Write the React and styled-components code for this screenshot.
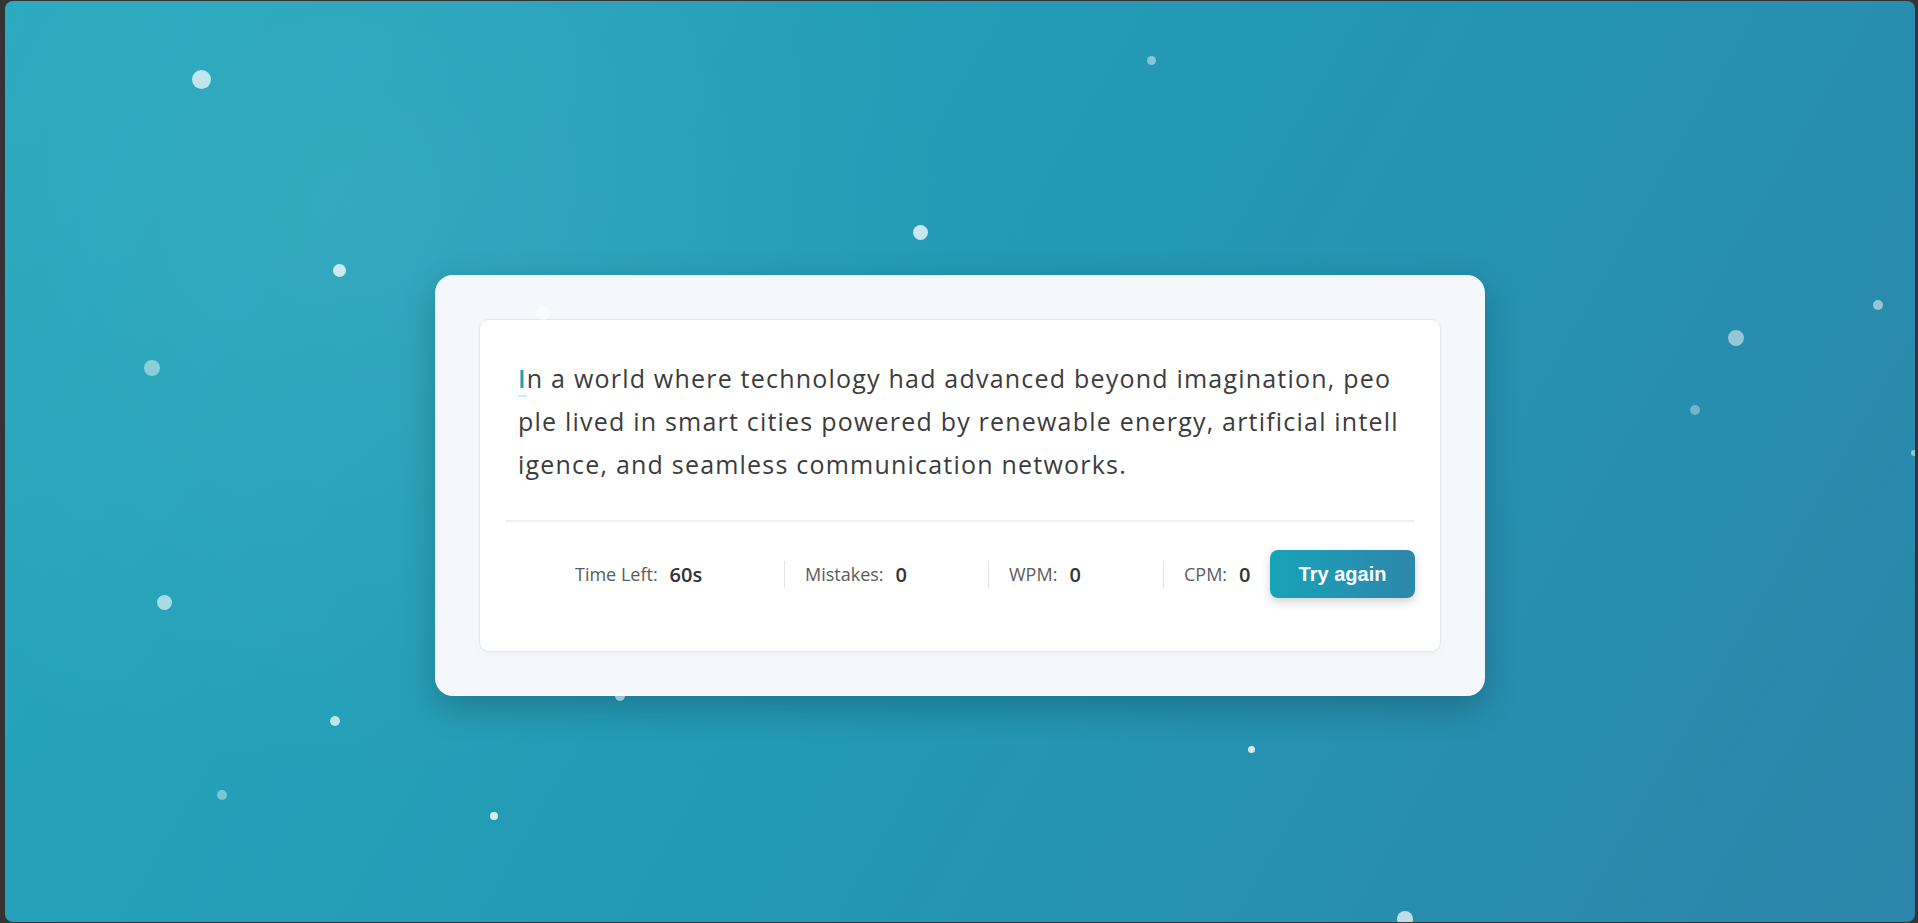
import styled, { createGlobalStyle } from "styled-components";

const GlobalStyle = createGlobalStyle`
  html, body {
    margin: 0;
    padding: 0;
    background: #343434;
    overflow: hidden;
  }
  * {
    box-sizing: border-box;
  }
`;

const lines = [
  "In a world where technology had advanced beyond imagination, peo",
  "ple lived in smart cities powered by renewable energy, artificial intell",
  "igence, and seamless communication networks.",
];

// page-space dots: x, y (centre), size, opacity
const dots = [
  [201, 79, 19, 0.7],
  [1151, 60, 9, 0.45],
  [920, 232, 15, 0.75],
  [339, 270, 13, 0.75],
  [543, 313, 14, 0.55],
  [152, 368, 16, 0.45],
  [164, 602, 15, 0.6],
  [335, 721, 10, 0.7],
  [222, 795, 10, 0.4],
  [494, 816, 8, 0.8],
  [620, 696, 10, 0.55],
  [1251, 749, 7, 0.8],
  [1405, 919, 16, 0.7],
  [1736, 338, 16, 0.5],
  [1695, 410, 10, 0.35],
  [1878, 305, 10, 0.5],
  [1914, 453, 6, 0.5],
];

const stats = [
  { label: "Time Left:", value: "60s", width: 209 },
  { label: "Mistakes:", value: "0", width: 204 },
  { label: "WPM:", value: "0", width: 175 },
  { label: "CPM:", value: "0", width: 107 },
];

const App = () => {
  return (
    <>
      <GlobalStyle />
      <Stage>
        {dots.map(([x, y, d, o], index) => (
          <Dot
            key={index}
            style={{
              left: x - 5 - d / 2,
              top: y - 1 - d / 2,
              width: d,
              height: d,
              opacity: o,
            }}
          />
        ))}
        <Card>
          <Panel>
            <Paragraph>
              {lines.map((line, li) => (
                <Line key={li}>
                  {line.split("").map((ch, ci) => (
                    <Char key={ci} $active={li === 0 && ci === 0}>
                      {ch}
                    </Char>
                  ))}
                </Line>
              ))}
            </Paragraph>
            <Divider />
            <Footer>
              <StatList>
                {stats.map((stat, index) => (
                  <Stat key={index} $w={stat.width} $first={index === 0}>
                    <Label>{stat.label}</Label>
                    <Value>{stat.value}</Value>
                  </Stat>
                ))}
              </StatList>
              <Button>Try again</Button>
            </Footer>
          </Panel>
        </Card>
      </Stage>
    </>
  );
};

const Stage = styled.div`
  position: relative;
  margin: 1px 3px 1px 5px;
  height: 921px;
  border-radius: 8px;
  overflow: hidden;
  background: radial-gradient(
      circle at 18% 22%,
      rgba(255, 255, 255, 0.07),
      rgba(255, 255, 255, 0) 35%
    ),
    linear-gradient(120deg, #26a8bd 0%, #2397b4 55%, #2c85aa 100%);
  display: flex;
  justify-content: center;
  align-items: flex-start;
  padding-top: 274px;
`;

const Dot = styled.span`
  position: absolute;
  border-radius: 50%;
  background: #ffffff;
  pointer-events: none;
  z-index: 2;
`;

const Card = styled.div`
  position: relative;
  z-index: 1;
  width: 1050px;
  padding: 44px;
  background: #f4f7fb;
  border-radius: 18px;
  box-shadow: 0 12px 34px rgba(0, 0, 0, 0.22);
`;

const Panel = styled.div`
  background: #ffffff;
  border: 1px solid #e5e8ec;
  border-radius: 10px;
  padding: 37px 25px 0;
  height: 333px;
  box-shadow: 0 2px 6px rgba(0, 0, 0, 0.03);
`;

const Paragraph = styled.div`
  padding: 0 13px;
  font-family: "Open Sans", "Noto Sans", sans-serif;
  font-size: 25px;
  letter-spacing: 1.2px;
  line-height: 43px;
  color: #3c3c3c;
`;

const Line = styled.div`
  white-space: pre;
`;

const Char = styled.span`
  ${(p) =>
    p.$active &&
    `
    color: #17a2b8;
    font-weight: 600;
    border-bottom: 2px solid rgba(23, 162, 184, 0.2);
  `}
`;

const Divider = styled.div`
  margin-top: 34px;
  height: 2px;
  background: #eef0f2;
`;

const Footer = styled.div`
  display: flex;
  align-items: center;
  padding: 28px 0 0 70px;
`;

const StatList = styled.ul`
  display: flex;
  align-items: center;
  margin: 0;
  padding: 0;
  list-style: none;
`;

const Stat = styled.li`
  display: flex;
  align-items: center;
  width: ${(p) => p.$w}px;
  height: 27px;
  padding-left: ${(p) => (p.$first ? 0 : 20)}px;
  border-left: ${(p) => (p.$first ? "none" : "1px solid #e2e4e7")};
  font-family: "Open Sans", "Noto Sans", sans-serif;
`;

const Label = styled.span`
  font-size: 18px;
  color: #5c5c5c;
`;

const Value = styled.span`
  margin-left: 12px;
  font-size: 20px;
  font-weight: 600;
  color: #333333;
`;

const Button = styled.button`
  width: 146px;
  height: 48px;
  border: none;
  border-radius: 8px;
  background: linear-gradient(90deg, #17a3b8 0%, #2e86ab 100%);
  color: #ffffff;
  font-family: "Liberation Sans", Arial, sans-serif;
  font-size: 20px;
  font-weight: 700;
  box-shadow: 0 4px 10px rgba(0, 0, 0, 0.18);
  cursor: pointer;
`;

export default App;
